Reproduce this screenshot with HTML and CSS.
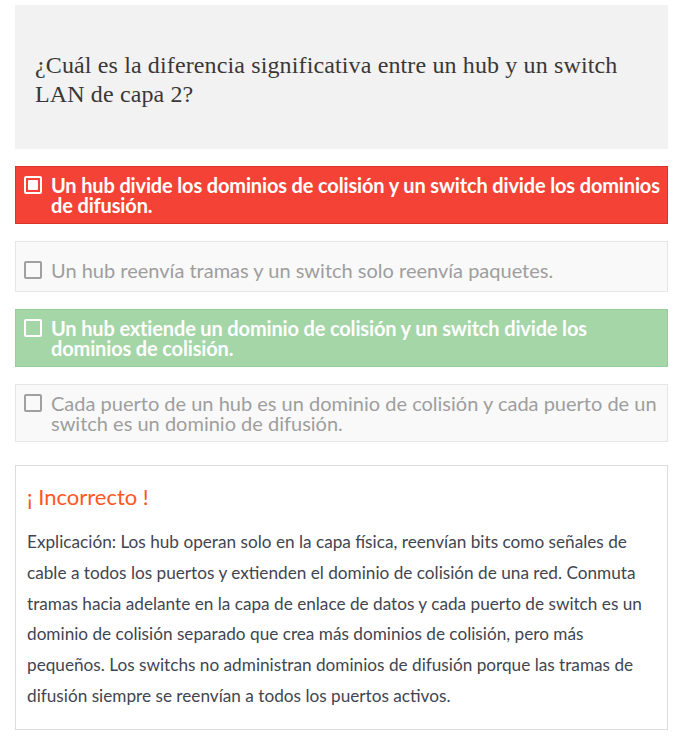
FILE: index.html
```html
<!DOCTYPE html>
<html lang="es">
<head>
<meta charset="utf-8">
<title>Pregunta</title>
<link rel="stylesheet" href="styles.css">
</head>
<body>
<div class="quiz">
  <div class="question">¿Cuál es la diferencia significativa entre un hub y un switch LAN de capa 2?</div>
  <ul class="options">
    <li class="option wrong"><span class="box checked"></span><span class="label">Un hub divide los dominios de colisión y un switch divide los dominios de difusión.</span></li>
    <li class="option plain single"><span class="box"></span><span class="label">Un hub reenvía tramas y un switch solo reenvía paquetes.</span></li>
    <li class="option right"><span class="box"></span><span class="label">Un hub extiende un dominio de colisión y un switch divide los dominios de colisión.</span></li>
    <li class="option plain"><span class="box"></span><span class="label">Cada puerto de un hub es un dominio de colisión y cada puerto de un switch es un dominio de difusión.</span></li>
  </ul>
  <div class="explain">
    <div class="verdict">¡ Incorrecto !</div>
    <p class="text">Explicación: Los hub operan solo en la capa física, reenvían bits como señales de cable a todos los puertos y extienden el dominio de colisión de una red. Conmuta tramas hacia adelante en la capa de enlace de datos y cada puerto de switch es un dominio de colisión separado que crea más dominios de colisión, pero más pequeños. Los switchs no administran dominios de difusión porque las tramas de difusión siempre se reenvían a todos los puertos activos.</p>
  </div>
</div>
</body>
</html>
```
FILE: styles.css
```css
* { box-sizing: border-box; }
html, body { margin: 0; padding: 0; background: #fff; }
body { font-family: Lato, "Noto Sans", sans-serif; }
.quiz { width: 653px; margin: 5px 0 0 15px; }
.question {
  background: #f2f2f2;
  padding: 46px 20px 40px 20px;
  min-height: 144px;
  font-family: "Liberation Serif", "DejaVu Serif", serif;
  font-size: 24px;
  letter-spacing: 0.13px;
  line-height: 29px;
  color: #3a3836;
  display: flex;
  align-items: center;
}
.options { list-style: none; margin: 17px 0 0; padding: 0; display: flex; flex-direction: column; gap: 17px; }
.option {
  display: flex;
  align-items: flex-start;
  gap: 9px;
  padding: 8px 3px 8px 8px;
  border: 1px solid #e6e6e6;
  font-size: 20px;
  line-height: 20px;
}
.option.single { padding-top: 18px; padding-bottom: 11px; }
.box {
  flex: none;
  width: 18px;
  height: 18px;
  margin-top: 1px;
  border: 2px solid #9e9e9e;
  border-radius: 2px;
  display: flex;
  align-items: center;
  justify-content: center;
}
.box.checked::after { content: ""; width: 10px; height: 10px; background: #fff; border-radius: 1px; }
.label { flex: 1; }
.wrong { background: #f44336; border-color: #d8352a; color: #fff; font-weight: 700; letter-spacing: -0.15px; }
.wrong .box { border-color: #fff; }
.right { background: #a5d6a7; border-color: #97cd99; color: #fff; font-weight: 700; letter-spacing: -0.15px; }
.right .box { border-color: #fff; }
.plain { background: #f9f9f9; color: #9e9e9e; }
.plain .box { border-color: #a0a0a0; }
.explain {
  margin-top: 23px;
  border: 1px solid #dcdcdc;
  padding: 19px 11px 17px 11px;
}
.verdict { color: #ff5722; font-size: 22px; line-height: 24px; }
.text { margin: 18px 0 0; font-size: 17.2px; line-height: 30.8px; color: #3f4551; }
```
